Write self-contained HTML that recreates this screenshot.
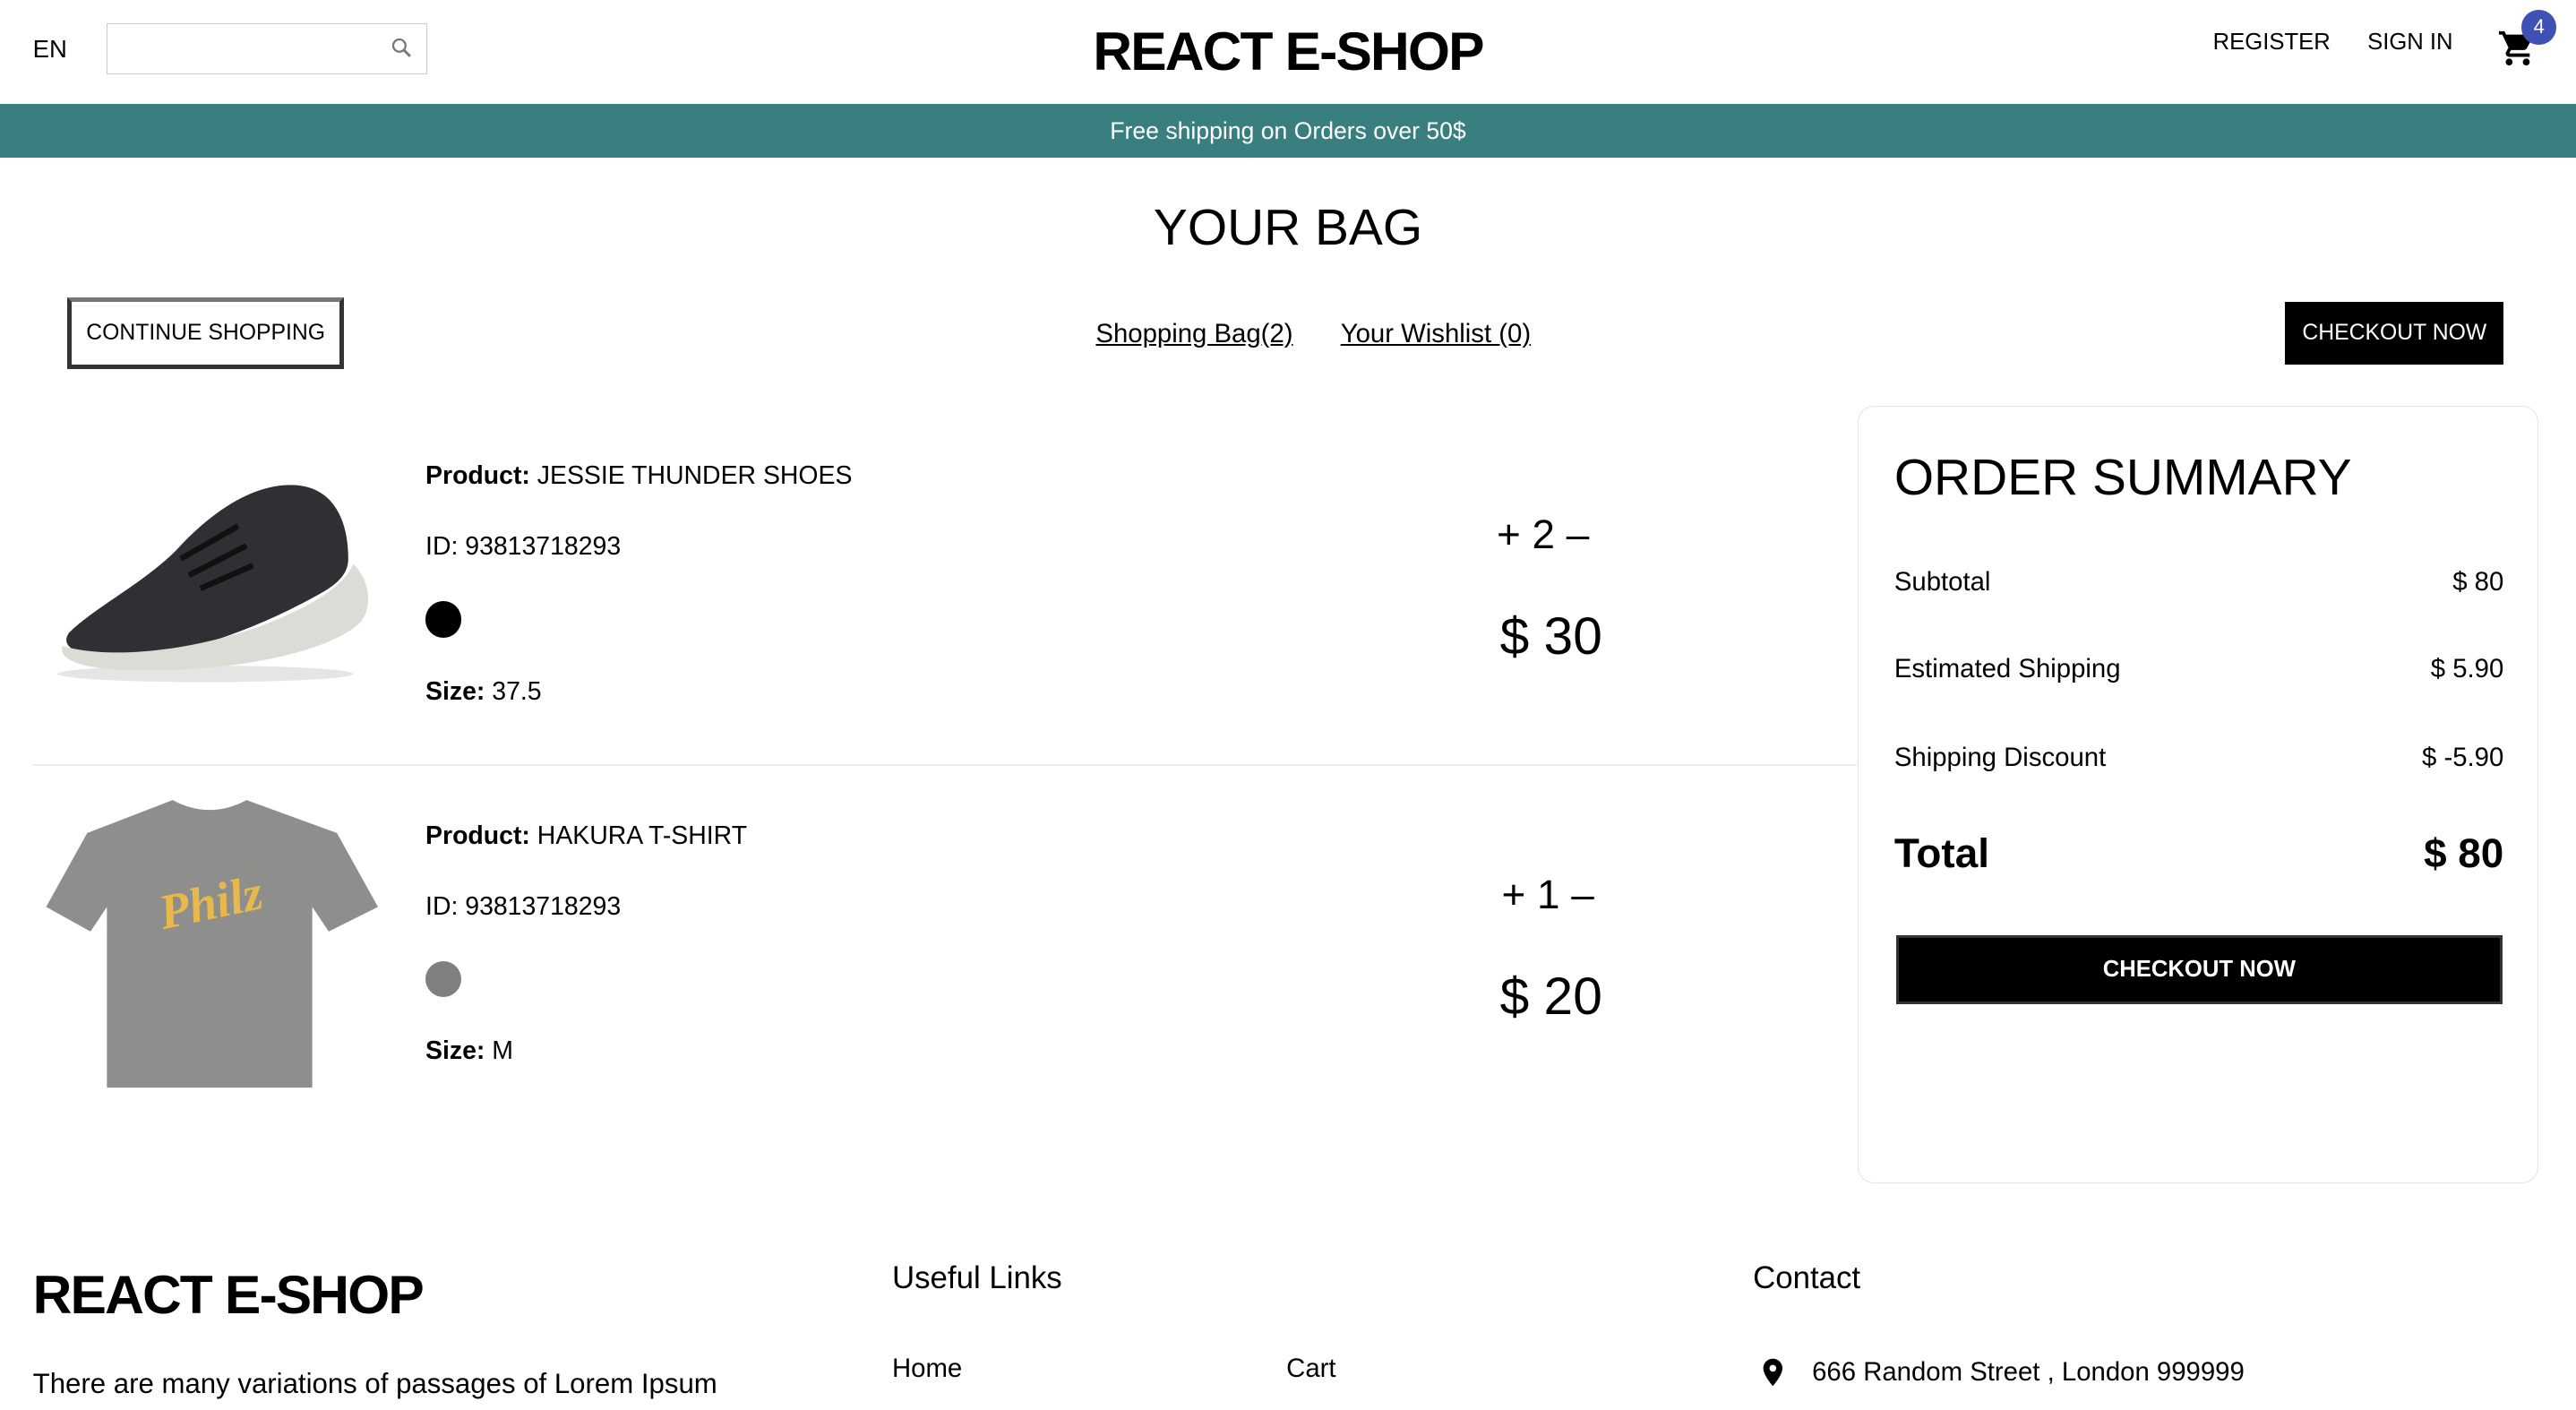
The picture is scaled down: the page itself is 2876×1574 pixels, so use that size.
<!DOCTYPE html>
<html><head><meta charset="utf-8"><style>
html,body{margin:0;padding:0;background:#fff;overflow:hidden}
body{width:1568px;height:858px;zoom:1.8342;position:relative;font-family:"Liberation Sans",sans-serif;color:#000}
.a{position:absolute;white-space:nowrap}
</style></head><body>
<div class="a" style="left:20px;top:21px;font-size:15px">EN</div>
<div class="a" style="left:65px;top:14px;width:194px;height:30px;border:1px solid #ccc"></div>
<svg class="a" style="left:237px;top:22px" width="15" height="15" viewBox="0 0 24 24"><circle cx="9.5" cy="9.5" r="6" fill="none" stroke="#777" stroke-width="2"/><path d="M14 14l6 6" stroke="#777" stroke-width="2.5"/></svg>
<div class="a" style="left:0;width:1568px;text-align:center;top:12px;font-size:33px;font-weight:bold;letter-spacing:-1px">REACT E-SHOP</div>
<div class="a" style="left:1347px;top:18px;font-size:14px">REGISTER</div>
<div class="a" style="left:1441px;top:18px;font-size:14px">SIGN IN</div>
<svg class="a" style="left:1520px;top:17px" width="25" height="25" viewBox="0 0 24 24"><path d="M7 18c-1.1 0-2 .9-2 2s.9 2 2 2 2-.9 2-2-.9-2-2-2zM1 2v2h2l3.6 7.590-1.35 2.45c-.16.28-.25.61-.25.96 0 1.1.9 2 2 2h12v-2H7.420c-.14 0-.25-.11-.25-.25l.03-.12.9-1.63h7.45c.75 0 1.41-.41 1.75-1.03l3.58-6.49A1 1 0 0020 4H5.21l-.94-2H1zm16 16c-1.1 0-2 .9-2 2s.9 2 2 2 2-.9 2-2-.9-2-2-2z"/></svg>
<div class="a" style="left:1535px;top:6px;width:21px;height:21px;border-radius:50%;background:#3f51b5;color:#fff;font-size:12px;text-align:center;line-height:21px">4</div>
<div class="a" style="left:0;top:63px;width:1568px;height:33px;background:#3a7f7f;color:#fff;text-align:center;line-height:33px;font-size:14.5px">Free shipping on Orders over 50$</div>
<div class="a" style="left:0;width:1568px;text-align:center;top:121px;font-size:31px;font-weight:300">YOUR BAG</div>
<div class="a" style="left:41px;top:181px;width:163px;height:38px;border:3px solid #333;border-top-color:#777;text-align:center;line-height:38px;font-size:13.5px">CONTINUE SHOPPING</div>
<div class="a" style="left:667px;top:194px;font-size:16px;text-decoration:underline">Shopping Bag(2)</div>
<div class="a" style="left:816px;top:194px;font-size:16px;text-decoration:underline">Your Wishlist (0)</div>
<div class="a" style="left:1391px;top:184px;width:133px;height:38px;background:#000;color:#fff;text-align:center;line-height:38px;font-size:13.5px">CHECKOUT NOW</div>
<!-- shoe -->
<svg class="a" style="left:30px;top:285px" width="200" height="135" viewBox="0 0 200 135"><ellipse cx="95" cy="125" rx="90" ry="5" fill="#e5e5e5"/><path d="M12 100c15-15 45-30 65-50 20-22 45-40 70-40 25 0 35 20 35 45 0 8-5 14-15 20-35 20-80 38-120 40-25 1-42-5-35-15z" fill="#2e3033"/><path d="M8 108c35 10 95 0 135-18 25-11 38-22 42-32 10 10 12 25 5 35-20 20-80 30-130 30-35 0-55-5-52-15z" fill="#dcdcd6"/><path d="M80 55l35-20M85 65l35-18M92 73l32-14" stroke="#111" stroke-width="3.5"/></svg>
<!-- shirt -->
<svg class="a" style="left:25px;top:482px" width="205" height="190" viewBox="0 0 205 190"><path d="M80 5c15 8 30 8 45 0l55 20 25 45-30 15-10-15 0 110H40l0-110-10 15-27-15 25-45z" fill="#8e8f8d"/><text x="72" y="78" font-family="Liberation Serif,serif" font-style="italic" font-weight="bold" font-size="30" fill="#e8b94a" transform="rotate(-12 100 70)">Philz</text></svg>
<div class="a" style="left:259px;top:281px;font-size:15.5px"><b style="font-weight:600">Product:</b> JESSIE THUNDER SHOES</div>
<div class="a" style="left:259px;top:324px;font-size:15.5px">ID: 93813718293</div>
<div class="a" style="left:259px;top:366px;width:22px;height:22px;border-radius:50%;background:#000"></div>
<div class="a" style="left:259px;top:412px;font-size:15.5px"><b style="font-weight:600">Size:</b> 37.5</div>
<div class="a" style="left:911px;top:311px;font-size:25px">+ 2 –</div>
<div class="a" style="left:913px;top:369px;font-size:32px;font-weight:300">$ 30</div>
<div class="a" style="left:20px;top:465px;width:1110px;height:1px;background:#eee"></div>
<div class="a" style="left:259px;top:500px;font-size:15.5px"><b style="font-weight:600">Product:</b> HAKURA T-SHIRT</div>
<div class="a" style="left:259px;top:543px;font-size:15.5px">ID: 93813718293</div>
<div class="a" style="left:259px;top:585px;width:22px;height:22px;border-radius:50%;background:#808080"></div>
<div class="a" style="left:259px;top:631px;font-size:15.5px"><b style="font-weight:600">Size:</b> M</div>
<div class="a" style="left:914px;top:530px;font-size:25px">+ 1 –</div>
<div class="a" style="left:913px;top:588px;font-size:32px;font-weight:300">$ 20</div>
<div class="a" style="left:1131px;top:247px;width:413px;height:472px;border:1px solid #e3e3e3;border-radius:10px"></div>
<div class="a" style="left:1153px;top:273px;font-size:31px;font-weight:300">ORDER SUMMARY</div>
<div class="a" style="left:1153px;top:345px;font-size:16px">Subtotal</div><div class="a" style="right:44px;top:345px;font-size:16px">$ 80</div>
<div class="a" style="left:1153px;top:398px;font-size:16px">Estimated Shipping</div><div class="a" style="right:44px;top:398px;font-size:16px">$ 5.90</div>
<div class="a" style="left:1153px;top:452px;font-size:16px">Shipping Discount</div><div class="a" style="right:44px;top:452px;font-size:16px">$ -5.90</div>
<div class="a" style="left:1153px;top:505px;font-size:25px;font-weight:600">Total</div><div class="a" style="right:44px;top:505px;font-size:25px;font-weight:600">$ 80</div>
<div class="a" style="left:1154px;top:569px;width:366px;height:39px;background:#000;border:2px solid #333;color:#fff;text-align:center;line-height:39px;font-size:14px;font-weight:bold">CHECKOUT NOW</div>
<div class="a" style="left:20px;top:769px;font-size:33px;font-weight:bold;letter-spacing:-1px">REACT E-SHOP</div>
<div class="a" style="left:20px;top:829px;font-size:17px;line-height:26px">There are many variations of passages of Lorem Ipsum<br>available, but the majority have suffered alteration in some</div>
<div class="a" style="left:543px;top:767px;font-size:19px">Useful Links</div>
<div class="a" style="left:543px;top:824px;font-size:16px">Home</div>
<div class="a" style="left:783px;top:824px;font-size:16px">Cart</div>
<div class="a" style="left:1067px;top:767px;font-size:19px">Contact</div>
<svg class="a" style="left:1069px;top:823px" width="20" height="24" viewBox="0 0 24 24"><path d="M12 2C8.1 2 5 5.1 5 9c0 5.2 7 13 7 13s7-7.8 7-13c0-3.9-3.1-7-7-7zm0 9.5a2.5 2.5 0 110-5 2.5 2.5 0 010 5z"/></svg>
<div class="a" style="left:1103px;top:826px;font-size:16px">666 Random Street , London 999999</div>
</body></html>
